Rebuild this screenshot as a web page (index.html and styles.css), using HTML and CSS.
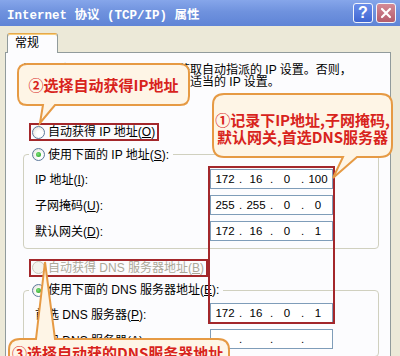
FILE: index.html
```html
<!DOCTYPE html>
<html lang="zh-CN">
<head>
  <meta charset="UTF-8" />
  <meta name="viewport" content="width=device-width, initial-scale=1.0"/>
  <title>Internet 协议 (TCP/IP) 属性</title>
  <link rel="stylesheet" href="styles.css">
</head>
<body>
  <div class="window">

    <div class="titlebar">
      <span class="title">Internet 协议 (TCP/IP) 属性</span>
      <div class="title-btns">
        <button class="tbtn help">?</button>
        <button class="tbtn close">
          <svg width="12" height="12" viewBox="0 0 12 12"><path d="M2 2 L10 10 M10 2 L2 10" stroke="#fff" stroke-width="2.2" stroke-linecap="round"/></svg>
        </button>
      </div>
    </div>

    <div class="dialog">
      <div class="tabs"><div class="tab">常规</div></div>
      <div class="panel">
        <p class="intro">如果网络支持此功能，则可以获取自动指派的 IP 设置。否则，<br>您需要从网络系统管理员处获得适当的 IP 设置。</p>

        <label class="radio-row mark first"><span class="radio"></span><span>自动获得 IP 地址(<u>O</u>)</span></label>

        <fieldset class="group">
          <legend><label class="radio-row"><span class="radio checked"></span><span>使用下面的 IP 地址(<u>S</u>):</span></label></legend>
          <div class="field-row">
            <span class="lbl">IP 地址(<u>I</u>):</span>
            <div class="ip"><span>172</span><i>.</i><span>16</span><i>.</i><span>0</span><i>.</i><span>100</span></div>
          </div>
          <div class="field-row">
            <span class="lbl">子网掩码(<u>U</u>):</span>
            <div class="ip"><span>255</span><i>.</i><span>255</span><i>.</i><span>0</span><i>.</i><span>0</span></div>
          </div>
          <div class="field-row">
            <span class="lbl">默认网关(<u>D</u>):</span>
            <div class="ip"><span>172</span><i>.</i><span>16</span><i>.</i><span>0</span><i>.</i><span>1</span></div>
          </div>
        </fieldset>

        <label class="radio-row mark disabled second"><span class="radio"></span><span>自动获得 DNS 服务器地址(<u>B</u>)</span></label>

        <fieldset class="group dns">
          <legend><label class="radio-row"><span class="radio checked"></span><span>使用下面的 DNS 服务器地址(<u>E</u>):</span></label></legend>
          <div class="field-row">
            <span class="lbl">首选 DNS 服务器(<u>P</u>):</span>
            <div class="ip"><span>172</span><i>.</i><span>16</span><i>.</i><span>0</span><i>.</i><span>1</span></div>
          </div>
          <div class="field-row">
            <span class="lbl">备用 DNS 服务器(<u>A</u>):</span>
            <div class="ip"><span></span><i>.</i><span></span><i>.</i><span></span><i>.</i><span></span></div>
          </div>
        </fieldset>
      </div>
    </div>

    <!-- annotations over the dialog -->
    <div class="field-mark"></div>

    <div class="callout c-auto-ip">
      <svg width="173" height="43"><path d="M10,1 H163 Q172,1 172,10 V33 Q172,42 163,42 H38 L23,60 L26,42 H10 Q1,42 1,33 V10 Q1,1 10,1 Z"/></svg>
      <div>②选择自动获得IP地址</div>
    </div>

    <div class="callout c-record">
      <svg width="181" height="65"><path d="M12,1 H169 Q180,1 180,12 V52 Q180,64 168,64 H145 L121,85 L131,64 H12 Q1,64 1,52 V12 Q1,1 12,1 Z"/></svg>
      <div>①记录下IP地址,子网掩码,</div>
      <div>默认网关,首选DNS服务器</div>
    </div>

    <div class="callout c-auto-dns">
      <svg width="222" height="45"><path d="M12,1 H28 L37,-76 L47,1 H210 Q221,1 221,12 V33 Q221,44 210,44 H12 Q1,44 1,33 V12 Q1,1 12,1 Z"/></svg>
      <div>③选择自动获的DNS服务器地址</div>
    </div>

  </div>
</body>
</html>
```

FILE: styles.css
```css
* {
  box-sizing: border-box;
}
body {
  margin: 0;
  width: 400px;
  height: 356px;
  overflow: hidden;
  background: #ece9d8;
  font-family: "Liberation Sans", "Noto Sans CJK SC", sans-serif;
  font-size: 12px;
  color: #000;
}
.window {
  position: relative;
  height: 356px;
}

/* title bar */
.titlebar {
  height: 26px;
  display: flex;
  align-items: center;
  justify-content: space-between;
  padding: 0 4px 0 7px;
  background: linear-gradient(#86a6ea, #6f92de 45%, #5f84d6);
}
.title {
  color: #fff;
  font-family: "Liberation Mono", "Noto Sans CJK SC", monospace;
  font-weight: bold;
  font-size: 12.5px;
  white-space: pre;
}
.title-btns {
  display: flex;
  gap: 3px;
}
.tbtn {
  width: 20px;
  height: 20px;
  padding: 0;
  border: 1px solid #f2f4fb;
  border-radius: 3px;
  display: flex;
  align-items: center;
  justify-content: center;
}
.help {
  background: linear-gradient(#6a8eea, #3f66d2);
  color: #fff;
  font-family: "Liberation Sans", sans-serif;
  font-weight: bold;
  font-size: 16px;
}
.close {
  background: linear-gradient(#d48a96, #b45d6c);
}

/* tab + panel */
.dialog {
  padding: 7px 9px 0 5px;
}
.tabs {
  display: flex;
  padding-left: 2px;
}
.tab {
  position: relative;
  z-index: 1;
  width: 51px;
  height: 20px;
  margin-bottom: -1px;
  padding-left: 7px;
  line-height: 18px;
  background: #fcfcfe;
  border: 1px solid #919b9c;
  border-top-color: #e6a84a;
  border-bottom: none;
  border-radius: 3px 3px 0 0;
  box-shadow: inset 0 1px 0 #f8cf7e;
}
.panel {
  height: 330px;
  padding: 11px 0 0 16px;
  background: #fcfcfe;
  border: 1px solid #919b9c;
}
.intro {
  margin: 0;
  line-height: 12px;
  white-space: nowrap;
}

/* radios */
.radio-row {
  display: inline-flex;
  align-items: center;
  gap: 3px;
  height: 18px;
  padding: 0 2px 0 1px;
  border: 2px solid transparent;
  line-height: 14px;
  white-space: nowrap;
}
.radio-row.first {
  margin: 35px 0 0 7px;
}
.radio-row.second {
  margin: 10px 0 0 7px;
}
.mark {
  border-color: #a3272b;
}
.radio {
  position: relative;
  flex: none;
  width: 13px;
  height: 13px;
  border-radius: 50%;
  border: 1px solid #5d7a9c;
  background: radial-gradient(circle at 60% 60%, #fff 30%, #dcdad0);
}
.radio.checked::after {
  content: "";
  position: absolute;
  left: 3px;
  top: 3px;
  width: 5px;
  height: 5px;
  border-radius: 50%;
  background: radial-gradient(circle at 40% 40%, #7ee07a, #1c9a18);
}
.disabled {
  color: #aca899;
}
.disabled .radio {
  border-color: #cac8bb;
  background: #f4f3ee;
}

/* group boxes */
.group {
  width: 356px;
  margin: 4px 0 0 1px;
  padding: 5px 0 7px 11px;
  border: 1px solid #d0d0bf;
  border-radius: 4px;
}
.group.dns {
  padding-top: 4px;
}
.group legend {
  margin-left: -6px;
  padding: 0;
}
.group legend .radio-row {
  display: flex;
}
.field-row {
  display: flex;
  align-items: center;
  height: 20px;
}
.field-row + .field-row {
  margin-top: 6px;
}
.lbl {
  width: 175px;
  white-space: nowrap;
}
.ip {
  display: flex;
  align-items: center;
  width: 123px;
  height: 20px;
  border: 1px solid #7f9db9;
  background: #fff;
  font-family: "Liberation Sans", sans-serif;
  font-size: 11.5px;
}
.ip span {
  flex: 1;
  text-align: center;
}
.ip i {
  font-style: normal;
  width: 3px;
}

/* annotations */
.field-mark {
  position: absolute;
  left: 208px;
  top: 166px;
  width: 127px;
  height: 158px;
  border: 2px solid #a3272b;
}
.callout {
  position: absolute;
  z-index: 2;
  display: flex;
  flex-direction: column;
  align-items: center;
  justify-content: center;
  color: #d8231c;
  font-family: "Noto Sans CJK SC", sans-serif;
  font-weight: bold;
  font-size: 15px;
  line-height: 17px;
  white-space: nowrap;
}
.callout svg {
  position: absolute;
  left: 0;
  top: 0;
  z-index: -1;
  overflow: visible;
}
.callout path {
  fill: #fef5e6;
  stroke: #e69a44;
  stroke-width: 2;
}
.c-auto-ip {
  left: 17px;
  top: 63px;
  width: 173px;
  height: 43px;
}
.c-record {
  left: 212px;
  top: 93px;
  width: 181px;
  height: 65px;
  padding-top: 4px;
}
.c-auto-dns {
  left: 8px;
  top: 338px;
  width: 222px;
  height: 45px;
  justify-content: flex-start;
  align-items: flex-start;
  padding: 6px 0 0 4px;
}
```
